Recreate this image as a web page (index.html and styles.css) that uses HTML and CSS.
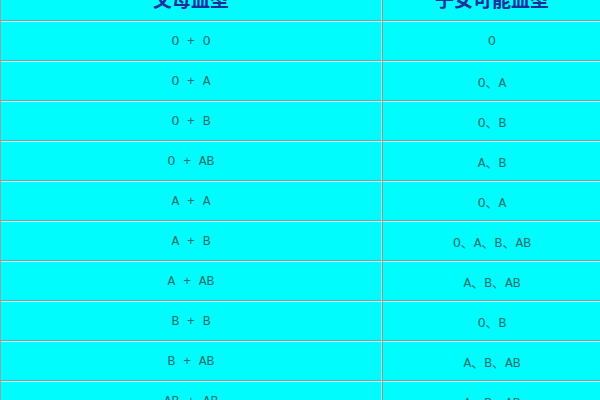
FILE: index.html
```html
<!DOCTYPE html>
<html lang="zh">
<head>
<meta charset="utf-8">
<link rel="stylesheet" href="styles.css">
</head>
<body>
<div class="frame">
<table class="blood">
<thead>
<tr><th class="col-parents">父母血型</th><th class="col-kids">子女可能血型</th></tr>
</thead>
<tbody>
<tr><td>O + O</td><td>O</td></tr>
<tr><td>O + A</td><td>O、A</td></tr>
<tr><td>O + B</td><td>O、B</td></tr>
<tr><td>O + AB</td><td>A、B</td></tr>
<tr><td>A + A</td><td>O、A</td></tr>
<tr><td>A + B</td><td>O、A、B、AB</td></tr>
<tr><td>A + AB</td><td>A、B、AB</td></tr>
<tr><td>B + B</td><td>O、B</td></tr>
<tr><td>B + AB</td><td>A、B、AB</td></tr>
<tr><td>AB + AB</td><td>A、B、AB</td></tr>
</tbody>
</table>
</div>
</body>
</html>
```
FILE: styles.css
```css
html, body {
  margin: 0;
  padding: 0;
  background: #ffffff;
}
.frame {
  width: 600px;
  height: 400px;
  overflow: hidden;
}
.blood {
  margin-top: -19px;
  margin-left: 0;
  width: 600px;
  border-collapse: separate;
  border-spacing: 0;
  table-layout: fixed;
  background: #00fcfc;
  border-left: 1px solid #8aa8a8;
  border-right: 1px solid #8aa8a8;
}
.col-parents { width: 380px; }
.col-kids { width: 218px; }
.blood th,
.blood td {
  height: 38px;
  padding: 0;
  text-align: center;
  vertical-align: middle;
  border-top: 1px solid #a6f6f6;
  border-bottom: 1px solid #7c9e9e;
}
.blood th {
  padding-bottom: 5px;
  height: 33px;
}
.blood th + th,
.blood td + td {
  border-left: 1px solid #7c9e9e;
}
.blood th:first-child,
.blood td:first-child {
  border-right: 1px solid #a6f6f6;
}
.blood th {
  font-family: "Noto Sans CJK SC", "Noto Sans", sans-serif;
  font-size: 19px;
  font-weight: bold;
  color: #1c2d9e;
}
.blood td {
  font-family: "Liberation Mono", "Noto Sans CJK SC", monospace;
  font-size: 13px;
  color: #23706f;
  white-space: pre;
}
```
